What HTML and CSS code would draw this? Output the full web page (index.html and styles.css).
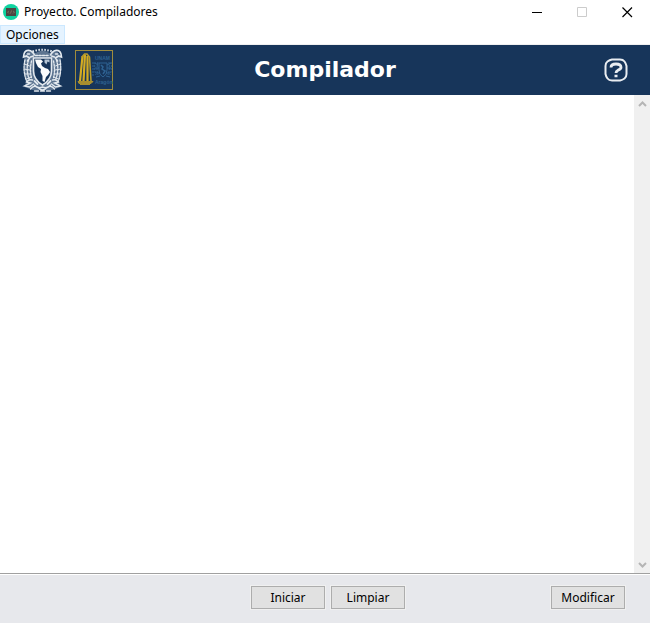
FILE: index.html
```html
<!DOCTYPE html>
<html lang="es">
<head>
<meta charset="utf-8">
<meta name="viewport" content="width=device-width, initial-scale=1">
<title>Proyecto. Compiladores</title>
<link rel="stylesheet" href="styles.css">
</head>
<body>
<div class="window">
  <div class="titlebar">
    <svg class="app-icon" viewBox="0 0 16 16" aria-hidden="true">
      <circle cx="8" cy="8" r="8" fill="#0fd3a0"/>
      <rect x="3" y="4" width="10" height="8" fill="#4b4744"/>
      <path d="M6 7 4.500 8 6 9.500M10 7l1.500 1L10 9.500M8.500 6.500l-1 3" fill="none" stroke="#857a62" stroke-width=".8"/>
    </svg>
    <span class="title">Proyecto. Compiladores</span>
    <div class="window-controls">
      <button class="window-button" type="button" aria-label="Minimizar">
        <svg viewBox="0 0 11 11"><path d="M0 5.500h10" stroke="#000"/></svg>
      </button>
      <button class="window-button" type="button" aria-label="Maximizar" disabled>
        <svg viewBox="0 0 11 11"><path d="M.5.5h9v9h-9z" fill="none" stroke="#ccc"/></svg>
      </button>
      <button class="window-button" type="button" aria-label="Cerrar">
        <svg viewBox="0 0 11 11"><path d="m.5.5 9.500 9.500M10 .5.5 10" stroke="#000" stroke-width="1.200"/></svg>
      </button>
    </div>
  </div>

  <nav class="menubar">
    <button class="menu-item" type="button">Opciones</button>
  </nav>

  <header class="banner">
    <div class="logos">
      <svg class="crest" viewBox="0 0 40 44" aria-hidden="true">
        <path d="M2 8Q6 0 13 5Q20 0 27 5Q34 0 38 8Q40 20 36 33L38 39 30 42H10L2 39 4 33Q0 20 2 8z" fill="#5d7591"/>
        <g fill="none" stroke="#e3e9ef" stroke-linecap="round">
          <path d="M10 3.500Q20 0 30 3.500" stroke-width="2" stroke-dasharray="1.500 1.500" stroke-linecap="butt"/>
          <path d="M12 7C9 1 3 1 1.500 6L1 9l3-1 3 2-2 3M28 7c3-6 9-6 10.500-1l.5 3-3-1-3 2 2 3" stroke-width="1.600"/>
          <path d="M5 6h2M33 6h2M8 9l3-1M32 9l-3-1" stroke-width="1.500"/>
          <path d="M2.500 12Q0 22 4 33M6 12Q3 22 7 32M9 13q-2 9 0 17M37.500 12q2 10-1.500 21M34 12q3 10-1 20M31 13q2 9 0 17" stroke-width="1.300" stroke-dasharray="1.800 1.200"/>
          <path d="M2 16l5 2M1.500 21l6 1M2 26l6 0M4 31l5-2M38 16l-5 2M38.500 21l-6 1M38 26h-6M36 31l-5-2"/>
          <path d="M11 10h18v13c0 7-4 11-9 14-5-3-9-7-9-14z" fill="#17355a" stroke-width="1.600"/>
          <path d="M13 7.500h14" stroke-width="1.600" stroke-dasharray="2 1.500"/>
          <path d="M10 32q-4-1-6 2l4 1-6 3 5 1 4-3M30 32q4-1 6 2l-4 1 6 3-5 1-4-3" stroke-width="1.400"/>
          <path d="M8 41q4-5 8-1 4 4 8 0 4-4 8 1M12 37q3 4 8 2 5 2 8-2M12 43h4m8 0h4M18 43h4" stroke-width="1.400"/>
          <path d="M12 33l3 3m13-3-3 3" stroke-width="1.800"/>
        </g>
        <path d="M12.500 11.500h6l2 2-2 2 1 2.500 3 2 3 1 2 3-2 3-2 2-1.500 5-2-1v-5l-2-4 .5-3-3-2-2-4z" fill="#fafcfd"/>
        <path d="M22 11.500h5v3l-2-1-1 3-2-2z" fill="#b5c5d5"/>
      </svg>
      <svg class="campus" viewBox="0 0 38 40" aria-hidden="true">
        <rect x=".5" y=".5" width="37" height="39" fill="none" stroke="#a08c3c"/>
        <path d="M7.500 6 5 31M10 4.500 8.500 31M12.500 6v25" stroke="#d4ac22" stroke-width="2.200"/>
        <path d="M7 7 9.500 4h2.500L14.500 7l1.500 24" fill="none" stroke="#b89b2c" stroke-width="1.600"/>
        <path d="M3 31.500h15l-2 2H4zM5 34.500h10" fill="#a78e2f" stroke="#a78e2f"/>
        <text class="campus-name" x="20" y="10">UNAM</text>
        <text class="campus-name" x="20" y="34">Aragón</text>
        <g fill="none" stroke="#2e6292">
          <path d="M18 12v14M20 12q-1 8 1 13M23 12q-2 8 0 13M34 12q1 8-1 13M36 12q1 8-1 13" stroke-dasharray="2 1"/>
          <path d="M24 13h8v7q0 5-4 7-4-2-4-7zM20 13l3 2M36 13l-4 2M20 18h4M32 18h4M21 23h4M31 23h4M21 27l4-1M35 27l-4-1"/>
          <path d="m26 15 2 2-1 2 3 2-2 3" stroke-width="1.500"/>
        </g>
      </svg>
    </div>
    <h1 class="banner-title">Compilador</h1>
    <button class="help" type="button" aria-label="Ayuda">
      <svg viewBox="0 0 24 24" fill="none" stroke="#e9edf1">
        <path d="M8 1.500h8q3 0 4.500 2T22.500 8v8q0 3-2 4.500T16 22.500H8q-3 0-4.500-2T1.500 16V8q0-3 2-4.500T8 1.500z" stroke-width="2"/>
        <path d="M7 9.500Q7 6 12 6t5 3.300q0 2-3 2.900-2 1-2 2.800" stroke-width="2.800"/>
        <path d="M10.500 18h3" stroke-width="2.500"/>
      </svg>
    </button>
  </header>

  <main class="editor">
    <textarea class="code" aria-label="Código fuente" spellcheck="false"></textarea>
    <div class="scrollbar">
      <button class="scroll-button" type="button" aria-label="Subir">
        <svg viewBox="0 0 9 6"><path d="m1 5 3.500-3.500L8 5" fill="none" stroke="#b5b5b5" stroke-width="2"/></svg>
      </button>
      <button class="scroll-button" type="button" aria-label="Bajar">
        <svg viewBox="0 0 9 6"><path d="m1 1 3.500 3.500L8 1" fill="none" stroke="#b5b5b5" stroke-width="2"/></svg>
      </button>
    </div>
  </main>

  <footer class="actions">
    <div class="main-actions">
      <button class="action" type="button">Iniciar</button>
      <button class="action" type="button">Limpiar</button>
    </div>
    <button class="action edit-action" type="button">Modificar</button>
  </footer>
</div>
</body>
</html>
```
FILE: styles.css
```css
* {
  box-sizing: border-box;
}

body {
  margin: 0;
  background: #fff;
  color: #000;
  font: 12px/16px "Noto Sans", "Open Sans", sans-serif;
}

button {
  margin: 0;
  padding: 0;
  border: 0;
  background: none;
  color: inherit;
  font: inherit;
}

svg {
  display: block;
}

.window {
  display: flex;
  flex-direction: column;
  min-height: 100vh;
}

.titlebar {
  display: flex;
  align-items: center;
  height: 25px;
  padding: 0 0 1px 3px;
}

.app-icon {
  width: 16px;
  height: 16px;
  margin-right: 5px;
}

.window-controls {
  display: flex;
  margin-left: auto;
}

.window-button {
  display: grid;
  place-items: center;
  width: 45px;
  height: 24px;
}

.window-button svg {
  width: 11px;
  height: 11px;
}

.menubar {
  display: flex;
  height: 20px;
  border-bottom: 1px solid #f0f0f0;
}

.menu-item {
  padding: 0 5px;
  border: 1px solid #cce8ff;
  background: #e5f3ff;
}

.banner {
  display: grid;
  grid-template-columns: 1fr auto 1fr;
  align-items: center;
  height: 50px;
  padding: 0 22px;
  background: #17355a;
  color: #fff;
}

.logos {
  display: flex;
  align-items: center;
  gap: 12px;
}

.crest {
  width: 41px;
  height: 44px;
}

.campus {
  width: 38px;
  height: 40px;
}

.campus-name {
  fill: #2e6292;
  font: bold 5px "Liberation Sans", sans-serif;
}

.banner-title {
  margin: 0;
  font: bold 22px/32px "DejaVu Sans", sans-serif;
}

.help {
  justify-self: end;
}

.help svg {
  width: 24px;
  height: 24px;
}

.editor {
  display: flex;
  flex: 1;
}

.code {
  flex: 1;
  min-width: 0;
  padding: 2px;
  border: 0;
  outline: 0;
  resize: none;
  background: #fff;
  font: 14px/20px "Liberation Mono", monospace;
}

.scrollbar {
  display: flex;
  flex-direction: column;
  justify-content: space-between;
  width: 16px;
  background: #f0f0f0;
}

.scroll-button {
  display: grid;
  place-items: center;
  height: 17px;
}

.scroll-button svg {
  width: 9px;
  height: 6px;
}

.actions {
  display: grid;
  grid-template-columns: 1fr auto 1fr;
  align-items: center;
  height: 50px;
  padding: 0 25px 2px 31px;
  border-top: 1px solid #a0a0a0;
  background: #e7e8ec;
  box-shadow: inset 0 1px #fff;
}

.main-actions {
  display: flex;
  grid-column: 2;
  gap: 6px;
}

.action {
  width: 74px;
  height: 23px;
  border: 1px solid #adadad;
  background: #e1e1e1;
  box-shadow: 0 0 0 1px #f0f0f0;
}

.edit-action {
  justify-self: end;
}
```
